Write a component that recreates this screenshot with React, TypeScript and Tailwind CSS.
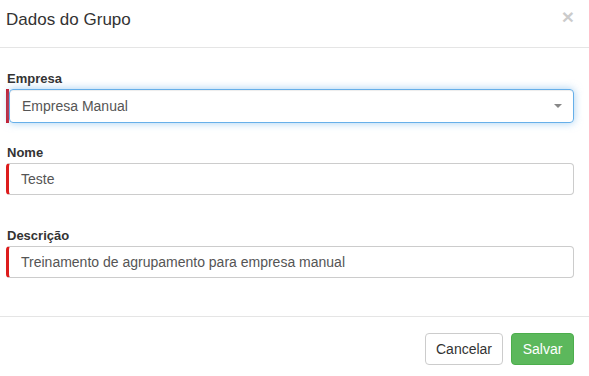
import React from 'react'

// Bootstrap-3 style "Dados do Grupo" modal

const FONT = "font-['Liberation_Sans',Arial,sans-serif]"

function Label({ children }: { children: React.ReactNode }) {
  return (
    <label className="block h-[18px] text-[13px] leading-[18px] font-bold text-[#333] pl-px">
      {children}
    </label>
  )
}

function TextField({ value }: { value: string }) {
  return (
    <div className="h-[32px] flex items-center rounded-[4px] border border-[#ccc] border-l-[3px] border-l-[#dd1c1c] pl-[12px] text-[14px] text-[#555] bg-white">
      {value}
    </div>
  )
}

export default function App() {
  return (
    <div className={`${FONT} w-[589px] h-[376px] bg-white text-[#333] flex flex-col overflow-hidden`}>
      {/* Header */}
      <div className="h-[48px] border-b border-[#e5e5e5] flex justify-between pl-[6px] pr-[15px] pt-[8px]">
        <h4 className="text-[17px] leading-[24px] text-[#333]">Dados do Grupo</h4>
        <span className="text-[21px] leading-[16px] font-bold text-black opacity-20 mt-[1px]">×</span>
      </div>

      {/* Body */}
      <div className="flex-1 pl-[6px] pr-[15px] pt-[22px]">
        <Label>Empresa</Label>
        <div className="mt-px flex h-[34px]">
          <div className="w-[3px] bg-[#cc1424]" />
          <div className="flex-1 flex items-center justify-between rounded-[4px] border border-[#66afe9] shadow-[0_0_8px_rgba(102,175,233,0.6),inset_0_1px_1px_rgba(0,0,0,0.075)] pl-[12px] pr-[11px] text-[14px] text-[#555]">
            <span>Empresa Manual</span>
            <svg width="8" height="4" viewBox="0 0 8 4">
              <path d="M0 0 L8 0 L4 4 Z" fill="#888" />
            </svg>
          </div>
        </div>

        <div className="mt-[21px]">
          <Label>Nome</Label>
          <div className="mt-px">
            <TextField value="Teste" />
          </div>
        </div>

        <div className="mt-[32px]">
          <Label>Descrição</Label>
          <div className="mt-px">
            <TextField value="Treinamento de agrupamento para empresa manual" />
          </div>
        </div>
      </div>

      {/* Footer */}
      <div className="h-[60px] border-t border-[#e5e5e5] flex justify-end items-start gap-2 pr-[15px] pt-[16px]">
        <button className="w-[78px] h-[32px] rounded-[4px] border border-[#ccc] bg-white text-[14px] text-[#333]">
          Cancelar
        </button>
        <button className="w-[63px] h-[32px] rounded-[4px] border border-[#4cae4c] bg-[#5cb85c] text-[14px] text-white">
          Salvar
        </button>
      </div>
    </div>
  )
}
